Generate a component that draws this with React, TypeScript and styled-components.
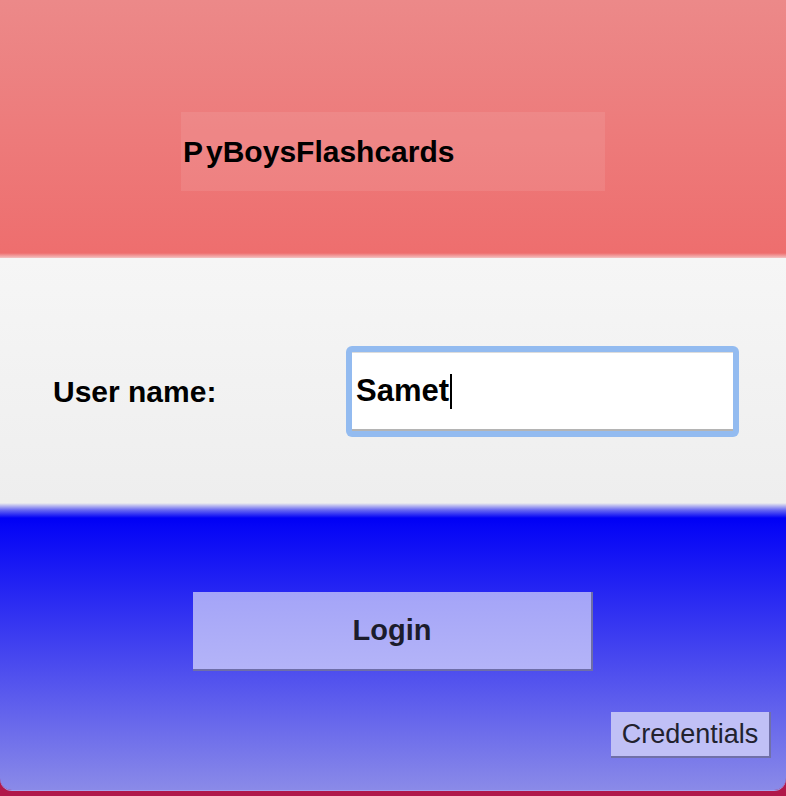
import styled, { createGlobalStyle } from 'styled-components';

const GlobalStyle = createGlobalStyle`
  html, body {
    margin: 0;
    padding: 0;
  }

  body {
    font-family: 'Liberation Sans', Arial, sans-serif;
    background: #b0184a;
  }
`;

const Styled = {
  Screen: styled.div`
    width: 786px;
    height: 796px;
    background: #b0184a;
    overflow: hidden;
  `,

  Window: styled.div`
    display: flex;
    flex-direction: column;
    height: 790px;
    border-radius: 0 0 12px 12px;
    overflow: hidden;
    box-shadow: 0 1px 0 #a4a4ee;
  `,

  Header: styled.header`
    display: flex;
    justify-content: center;
    height: 258px;
    padding-top: 112px;
    box-sizing: border-box;
    background: linear-gradient(to bottom, #ec8989 0, #ee6e6e 253px, #f6f6f6 261px);
  `,

  TitleBox: styled.div`
    display: flex;
    align-items: center;
    width: 424px;
    height: 79px;
    padding-left: 2px;
    box-sizing: border-box;
    background: rgba(255, 255, 255, 0.09);
  `,

  Title: styled.h1`
    margin: 0;
    font-size: 30px;
    font-weight: 700;
    color: #000;

    &::first-letter {
      margin-right: 3px;
    }
  `,

  FormBand: styled.section`
    height: 252px;
    padding: 88px 47px 0 53px;
    box-sizing: border-box;
    background: linear-gradient(to bottom, #f6f6f6 0, #eeeeee 245px, #6868f2 252px);
  `,

  Row: styled.div`
    display: grid;
    grid-template-columns: 293px 1fr;
    align-items: center;
  `,

  Label: styled.label`
    font-size: 30px;
    font-weight: 700;
    color: #000;
  `,

  FocusRing: styled.div`
    padding: 6px;
    border-radius: 6px;
    background: #93bbf0;
  `,

  Field: styled.div`
    display: flex;
    align-items: center;
    height: 79px;
    padding-left: 4px;
    box-sizing: border-box;
    background: #fff;
    border-top: 1px solid #dcdcdc;
    border-bottom: 2px solid #b4b4b4;
    font-size: 31px;
    font-weight: 700;
    color: #000;
  `,

  Caret: styled.span`
    display: inline-block;
    width: 2px;
    height: 35px;
    margin-left: 1px;
    background: #000;
  `,

  Footer: styled.section`
    flex: 1;
    display: flex;
    flex-direction: column;
    padding: 82px 15px 0 0;
    background: linear-gradient(to bottom, #6868f2 0, #0000f5 8px, #0505f6 16px, #8a8ae8 100%);
  `,

  LoginButton: styled.button`
    align-self: center;
    width: 400px;
    height: 79px;
    margin-left: 15px;
    border: none;
    border-right: 2px solid #6e6ea8;
    border-bottom: 2px solid #6e6ea8;
    background: linear-gradient(to bottom, #a4a4f8, #b4b4f8);
    font-family: 'Liberation Sans', Arial, sans-serif;
    font-size: 29px;
    font-weight: 700;
    color: #1c1c2c;
    padding: 0;
  `,

  CredentialsButton: styled.button`
    align-self: flex-end;
    margin-top: 41px;
    width: 160px;
    height: 46px;
    padding: 0;
    border: none;
    border-right: 2px solid #7070a8;
    border-bottom: 2px solid #7070a8;
    background: #c0c0f6;
    font-family: 'Liberation Sans', Arial, sans-serif;
    font-size: 27px;
    color: #22222e;
  `,
};

export default function App() {
  return (
    <Styled.Screen>
      <GlobalStyle />
      <Styled.Window>
        <Styled.Header>
          <Styled.TitleBox>
            <Styled.Title>PyBoysFlashcards</Styled.Title>
          </Styled.TitleBox>
        </Styled.Header>

        <Styled.FormBand>
          <Styled.Row>
            <Styled.Label>User name:</Styled.Label>
            <Styled.FocusRing>
              <Styled.Field>
                Samet
                <Styled.Caret />
              </Styled.Field>
            </Styled.FocusRing>
          </Styled.Row>
        </Styled.FormBand>

        <Styled.Footer>
          <Styled.LoginButton>Login</Styled.LoginButton>
          <Styled.CredentialsButton>Credentials</Styled.CredentialsButton>
        </Styled.Footer>
      </Styled.Window>
    </Styled.Screen>
  );
}
